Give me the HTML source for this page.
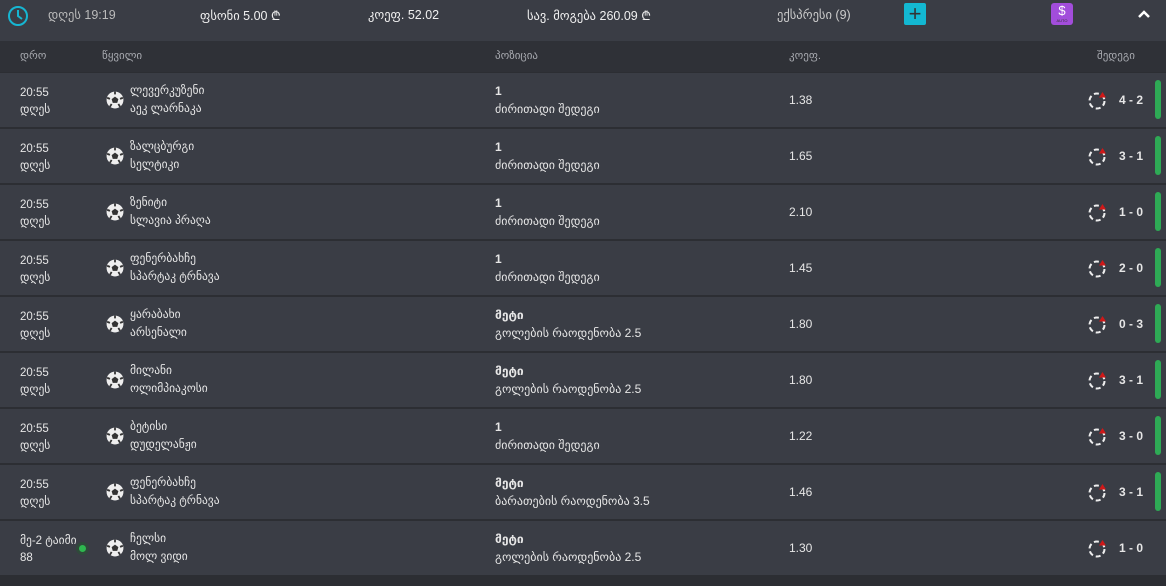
<!DOCTYPE html>
<html><head><meta charset="utf-8"><style>
*{margin:0;padding:0;box-sizing:border-box}
body{width:1166px;height:586px;background:#2c2e33;font-family:"Liberation Sans","DejaVu Sans",sans-serif;color:#e6e6e6;overflow:hidden;position:relative}
.top{position:absolute;left:0;top:0;width:1166px;height:41px;background:#3a3d45;font-size:12.5px;color:#f0f0f0}
.top span{position:absolute;top:7px}
.hdr{position:absolute;left:0;top:41px;width:1166px;height:31px;background:#2f3137;font-size:11px;color:#a8aab0}
.hdr span{position:absolute;top:8px}
.row{position:absolute;left:0;width:1166px;height:54px;background:#3a3d45;font-size:11.5px}
.row div{position:absolute}
.t{left:20px;top:12px;line-height:17px;font-size:11.5px}
.ball{left:106px;top:18px;width:18px;height:18px}
.team{left:130px;top:9px;line-height:18px;font-size:11.5px}
.pos{left:495px;top:9px;line-height:18px;font-size:12px}
.pos b{font-weight:bold}
.k{left:789px;top:20px;font-size:12px}
.sc{left:1119px;top:20px;font-size:12px;font-weight:bold}
.sp{left:1088px;top:17px;width:20px;height:20px}
.bar{left:1155px;top:7px;width:6px;height:39px;background:#2eaa55;border-radius:3px}
</style></head><body>
<div class="top">
<svg style="position:absolute;left:7px;top:5px" width="22" height="22" viewBox="0 0 22 22"><circle cx="11" cy="11" r="9" fill="none" stroke="#16b6d2" stroke-width="2"/><path d="M11 5v6l4 3" fill="none" stroke="#16b6d2" stroke-width="2"/></svg>
<span style="left:48px;color:#bbb">დღეს 19:19</span>
<span style="left:200px">ფსონი 5.00 ₾</span>
<span style="left:368px">კოეფ. 52.02</span>
<span style="left:527px">სავ. მოგება 260.09 ₾</span>
<span style="left:777px;color:#ccc">ექსპრესი (9)</span>
<div style="position:absolute;left:904px;top:3px;width:22px;height:22px;background:#13b8d2;border-radius:2px;color:#333;font-size:22px;line-height:21px;text-align:center">+</div>
<div style="position:absolute;left:1051px;top:3px;width:22px;height:22px;background:#a24ddb;border-radius:3px;color:#fff;font-size:13px;line-height:16px;text-align:center">$<div style="font-size:4px;line-height:4px;color:#333">AUTO</div></div>
<svg style="position:absolute;left:1137px;top:9px" width="14" height="10" viewBox="0 0 14 10"><path d="M2 8l5-5 5 5" fill="none" stroke="#fff" stroke-width="2.5"/></svg>
</div>
<div class="hdr"><span style="left:20px">დრო</span><span style="left:102px">წყვილი</span><span style="left:495px">პოზიცია</span><span style="left:789px">კოეფ.</span><span style="left:1097px">შედეგი</span></div>
<div id="rows"></div>
<script>
var d=[["20:55","დღეს","ლევერკუზენი","აეკ ლარნაკა","1","ძირითადი შედეგი","1.38","4 - 2",1],
["20:55","დღეს","ზალცბურგი","სელტიკი","1","ძირითადი შედეგი","1.65","3 - 1",1],
["20:55","დღეს","ზენიტი","სლავია პრაღა","1","ძირითადი შედეგი","2.10","1 - 0",1],
["20:55","დღეს","ფენერბახჩე","სპარტაკ ტრნავა","1","ძირითადი შედეგი","1.45","2 - 0",1],
["20:55","დღეს","ყარაბახი","არსენალი","მეტი","გოლების რაოდენობა 2.5","1.80","0 - 3",1],
["20:55","დღეს","მილანი","ოლიმპიაკოსი","მეტი","გოლების რაოდენობა 2.5","1.80","3 - 1",1],
["20:55","დღეს","ბეტისი","დუდელანჟი","1","ძირითადი შედეგი","1.22","3 - 0",1],
["20:55","დღეს","ფენერბახჩე","სპარტაკ ტრნავა","მეტი","ბარათების რაოდენობა 3.5","1.46","3 - 1",1],
["მე-2 ტაიმი","88","ჩელსი","მოლ ვიდი","მეტი","გოლების რაოდენობა 2.5","1.30","1 - 0",0]];
var h="";
var ball='<svg viewBox="0 0 16 16" width="18" height="18"><circle cx="8" cy="8" r="7.5" fill="#eee"/><polygon points="8,5 11,7.2 10,10.5 6,10.5 5,7.2" fill="#333"/><path d="M8 0.5v2.5M15 6l-2.5 1M12.5 14l-1.5-2.5M3.5 14l1.5-2.5M1 6l2.5 1" stroke="#333" stroke-width="1.6"/></svg>';
var sp='<svg viewBox="0 0 20 20" width="20" height="20"><circle cx="9" cy="11" r="7.5" fill="none" stroke="#eee" stroke-width="2" stroke-dasharray="5 3"/><polygon points="14.5,2 18,7.5 11,7.5" fill="#d01818"/></svg>';
d.forEach(function(r,i){var y=73+i*56;
h+='<div class="row" style="top:'+y+'px"><div class="t">'+r[0]+'<br>'+r[1]+'</div>'+(r[8]?'':'<div style="left:79px;top:24px;width:7px;height:7px;border-radius:50%;background:#2eb84f;box-shadow:0 0 0 3px #2f4a3a"></div>')+'<div class="ball">'+ball+'</div><div class="team">'+r[2]+'<br>'+r[3]+'</div><div class="pos"><b>'+r[4]+'</b><br>'+r[5]+'</div><div class="k">'+r[6]+'</div><div class="sp">'+sp+'</div><div class="sc">'+r[7]+'</div>'+(r[8]?'<div class="bar"></div>':'')+'</div>';});
document.getElementById("rows").innerHTML=h;
</script>
</body></html>
